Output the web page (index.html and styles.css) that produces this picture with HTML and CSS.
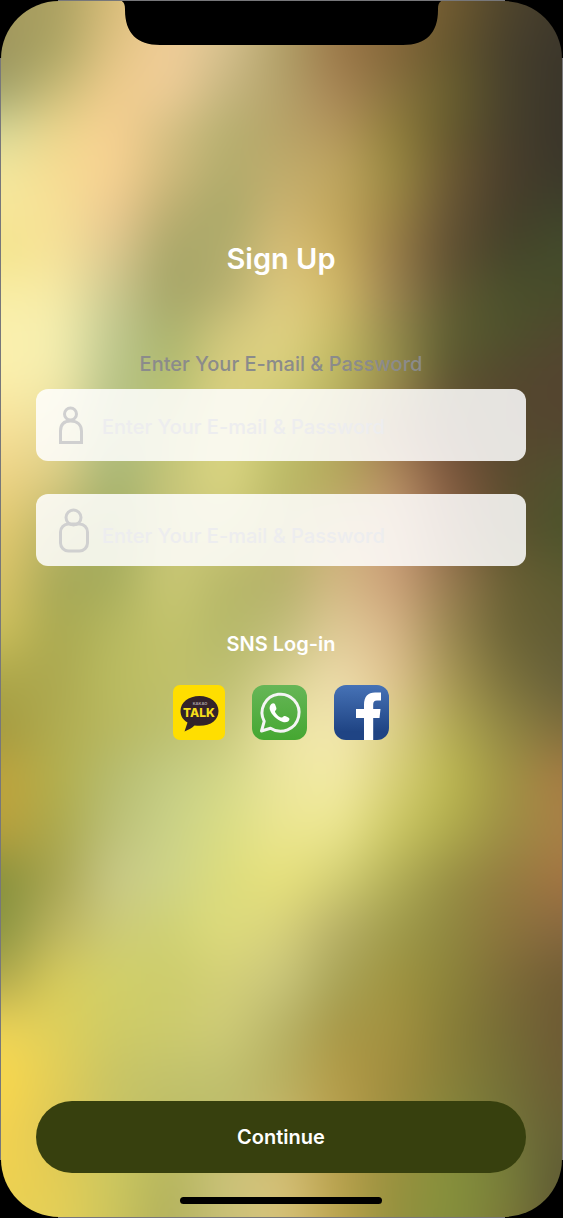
FILE: index.html
```html
<!DOCTYPE html>
<html lang="en">
<head>
<meta charset="utf-8">
<meta name="viewport" content="width=device-width, initial-scale=1">
<title>Sign Up</title>
<link rel="stylesheet" href="styles.css">
</head>
<body>
<div class="device">
  <main class="screen">
    <div class="backdrop" id="backdrop" aria-hidden="true"></div>
    <svg class="notch" viewBox="0 0 328 46" aria-hidden="true">
      <path d="M0 0H328C322 0 320 3 320 9V10C320 33 308 45 285 45H42C19 45 7 33 7 10V9C7 3 5 0 -1 0Z"/>
    </svg>

    <form class="signup">
      <h1 class="title">Sign Up</h1>
      <p class="hint">Enter Your E-mail &amp; Password</p>

      <div class="field">
        <svg class="field-icon" viewBox="0 0 32 46" aria-hidden="true">
          <circle cx="12.500" cy="12" r="6"/>
          <path d="M2.500 40.500V29C2.500 22.500 6 19 12.500 19S23.500 22.500 23.500 29V40.500Z"/>
        </svg>
        <input class="field-input" type="email" aria-label="E-mail" placeholder="Enter Your E-mail &amp; Password">
      </div>

      <div class="field field-password">
        <svg class="field-icon" viewBox="0 0 32 46" aria-hidden="true">
          <circle cx="15.500" cy="10.500" r="7.500"/>
          <rect x="2.500" y="17" width="27" height="27" rx="8"/>
        </svg>
        <input class="field-input" type="password" aria-label="Password" placeholder="Enter Your E-mail &amp; Password">
      </div>

      <h2 class="sns-title">SNS Log-in</h2>
      <div class="sns">
        <button class="sns-button" type="button" aria-label="KakaoTalk">
          <svg width="52" height="55" viewBox="0 0 52 55">
            <rect width="52" height="55" rx="7" fill="#ffde00"/>
            <path d="M26.500 11C15.500 11 7.500 17.500 7.500 26C7.500 31 10 35 14.500 37.500L11.500 46.500C16 44.500 19 43 21.500 40.500C36 42.500 45.500 36 45.500 26C45.500 17.500 37.500 11 26.500 11Z" fill="#33232a"/>
            <text x="27" y="20" class="kakao-small">KAKAO</text>
            <text x="26" y="32" class="kakao-talk">TALK</text>
          </svg>
        </button>
        <button class="sns-button" type="button" aria-label="WhatsApp">
          <svg width="55" height="55" viewBox="0 0 55 55">
            <defs><linearGradient id="wa" x2="0" y2="1"><stop stop-color="#66b657"/><stop offset="1" stop-color="#45a731"/></linearGradient></defs>
            <rect width="55" height="55" rx="12" fill="url(#wa)"/>
            <path d="M9.500 46L12.200 36.300A18.500 18.500 0 1 1 18.500 43.200Z" fill="none" stroke="#f4f4f4" stroke-width="3" stroke-linejoin="round"/>
            <path d="M20.500 18.500C22 18 23 19 23.500 20.500C24.500 23 25 24 23.500 25.500C22.500 26.500 23 27 24 28.500C25.500 31 27.500 32 29 32.500C30.500 33 31.500 30.500 33 31C34.500 31.500 37.500 32.500 37.500 34C37.500 36.500 34 38 31 37C24 34.500 19.500 29.500 18 25C17 22 18.500 19 20.500 18.500Z" fill="#fff"/>
          </svg>
        </button>
        <button class="sns-button" type="button" aria-label="Facebook">
          <svg width="55" height="55" viewBox="0 0 55 55">
            <defs><linearGradient id="fb" x2="0" y2="1"><stop stop-color="#4672b6"/><stop offset=".85" stop-color="#1f4484"/></linearGradient></defs>
            <rect width="55" height="55" rx="12" fill="url(#fb)"/>
            <path d="M30 55V33H22V24H30V20C30 11.500 34 7.500 41 7.500H47V15.500H43C40.300 15.500 39.200 16.800 39.200 19.500V24H46.500L45.500 33H39.200V55Z" fill="#fff"/>
          </svg>
        </button>
      </div>

      <button class="continue" type="submit">Continue</button>
      <div class="home-bar"></div>
    </form>
  </main>
</div>
<script src="backdrop.js"></script>
</body>
</html>
```
FILE: styles.css
```css
* { box-sizing: border-box; }

body {
  margin: 0;
  background: #000;
  font-family: Inter, "Liberation Sans", sans-serif;
}

.device {
  display: flex;
  min-height: 100vh;
  padding: 1px;
  background:
    linear-gradient(#77777a, #77777a) center / 100% calc(100% - 116px) no-repeat,
    linear-gradient(#77777a, #77777a) center / calc(100% - 116px) 100% no-repeat,
    #000;
}

.screen {
  position: relative;
  display: flex;
  flex: 1;
  overflow: hidden;
  border-radius: 58px;
}

.backdrop {
  position: absolute;
  inset: -60px;
  filter: blur(18px);
}

.band { position: absolute; inset: 0; }

.notch {
  position: absolute;
  top: -1px;
  left: calc(50% - 164px);
  width: 328px;
  height: 46px;
}

.signup {
  position: relative;
  display: flex;
  flex: 1;
  flex-direction: column;
  padding: 238px 36px 13px 35px;
}

.title, .hint, .sns-title {
  margin: 0;
  text-align: center;
  font-weight: 600;
  color: #fff;
}

.title { font-size: 29px; line-height: 40px; }

.hint {
  margin-top: 71px;
  font-size: 20px;
  font-weight: 500;
  line-height: 28px;
  color: #8b8b8b;
}

.field {
  display: flex;
  align-items: center;
  height: 72px;
  margin-top: 11px;
  padding: 0 20px 0 22px;
  border-radius: 12px;
  background: rgba(255, 255, 255, .85);
}

.field-password { margin-top: 33px; }

.field-icon {
  width: 32px;
  height: 46px;
  flex: none;
  fill: none;
  stroke: #d0d0d0;
  stroke-width: 3;
}

.field-input {
  flex: 1;
  min-width: 0;
  height: 100%;
  margin-left: 12px;
  padding: 4px 0 0;
  border: 0;
  outline: 0;
  background: none;
  font: 500 20px/28px Inter, "Liberation Sans", sans-serif;
  color: #555;
}

.field-password .field-input { padding-top: 12px; }
.field-input::placeholder { color: #ededef; opacity: 1; }

.sns-title { margin-top: 64px; font-size: 20px; line-height: 28px; }

.sns {
  display: flex;
  justify-content: center;
  gap: 27px;
  margin: 27px 0 40px;
}

.sns-button { padding: 0; border: 0; background: none; cursor: pointer; }
.sns-button svg { display: block; }

.kakao-talk {
  font: 800 12px Inter, sans-serif;
  text-anchor: middle;
  fill: #f5de1a;
}

.kakao-small {
  font: 700 4px Inter, sans-serif;
  text-anchor: middle;
  fill: #a8a0a4;
}

.continue {
  height: 72px;
  margin-top: auto;
  border: 0;
  border-radius: 36px;
  background: #37400e;
  font: 600 20px/28px Inter, "Liberation Sans", sans-serif;
  color: #fff;
  cursor: pointer;
}

.home-bar {
  width: 202px;
  height: 7px;
  margin: 24px auto 0;
  border-radius: 4px;
  background: #000;
}
```
FILE: backdrop.js
```js
// Colour mesh: each row is [height on a 1218-unit scale, eleven colours left to right].
const mesh = [
  [0, "a89c60 a99f60 d8bd78 f0cc94 dfc796 b8a66c 9c7a4c 8a6c3c 705a30 4f452c 40392c"],
  [50, "9c945c aca663 e3c484 f2ce9a d4c08e b0a068 9c7848 84663a 66582e 48402c 3b362b"],
  [90, "a2a46c cbbd78 f0cc8c efcd98 c6b680 b4a26a a88455 8a7440 6a602e 48412c 3a352a"],
  [130, "d6d898 ecd68c f8d092 d6c084 b6b070 b8a468 b4965c 92803c 665a2e 48402c 3a352a"],
  [170, "f2e79c f6dc92 f8d292 d0ba7c b2ac6c c0ac6c c0a660 9a8a42 6c5832 4a3e2c 3b382a"],
  [210, "f7e79a f7e096 eeca92 bcae70 a8a868 ccb472 c2a75c 9c8444 665434 463e2a 3e422a"],
  [250, "f3e48c f7e29a dec890 a8a668 b0ac6c d8bf78 cbb060 987c48 604f32 45442a 444c2c"],
  [290, "f8eda2 f7eaa6 ccc890 a4a466 b4ae6e deca80 d2b968 9c8250 605732 4b502c 474c2a"],
  [330, "fbf0ae f5efb0 c0c890 a8b06c d0c67c e2d284 cabc68 948a4c 5e5e32 4e522c 50482e"],
  [375, "fcf0ac f4ecae b8c48a b0bc6e dcd080 d8d07c bcb860 98904c 5c5630 54482e 544430"],
  [430, "f8e098 e8dc98 aebc80 c0c474 dcd484 c4c270 b4a860 98704c 6a4e38 56482e 544630"],
  [475, "eed486 dccc84 a4b474 c4c478 ded884 babb66 b4a85a b48c60 80583e 5a4a2e 50522e"],
  [530, "e4ca70 b8b468 a0ac60 c8c478 ccc878 bcb668 cab078 c89c78 8c6448 5c502e 4c542c"],
  [580, "dac468 a6a858 a6ac5c ccca76 b8b868 b4b06a d4b884 cca078 987a50 6a6034 5c5a30"],
  [630, "cec05c a8a850 b6b860 c4c46c b4b868 c0bc78 e0cb98 d8b688 9a8850 6c6436 625c34"],
  [680, "aca648 aca850 babc60 c0c068 bcbe70 d8d090 eedcac e0c490 a89854 7c723c 66603a"],
  [730, "a49a40 b0ac50 b8b860 bcc070 c8c87c ece4a4 f3e8b0 dcd088 b4ac54 928844 806e3c"],
  [780, "c0a43c b2ae4c b6bc70 c4cc84 d4d888 ece69c f3eba6 d8d078 bcb850 a09444 a87c44"],
  [830, "b8a03c aaa84c bcc078 cad288 dadd84 ece690 ece690 ccc864 b0ac4c 9c8e44 a88046"],
  [880, "86903c a8a450 c8c888 ced488 dcdc7c e8e27c d4d074 b4b058 989044 947c40 a47442"],
  [930, "8a9440 bcb460 cccb78 cfd174 dedc7c d8d27c b8b068 a09c4c 908840 8c743c 886840"],
  [980, "b0a84c d8cc5c d2d068 cccc6c d4d078 cac67c a8a458 a09440 8c843a 7e6c38 705c34"],
  [1030, "eed458 dfd05a cecb66 cccb6c cecb78 b8b468 a89848 a39240 887e38 766c36 6e5a34"],
  [1080, "fad84c e2cd58 c8c464 c2c26c c0c06e b8b060 b49c48 a08c3e 888039 747036 6c5c34"],
  [1130, "f4d250 dcc858 c8c464 bcbc64 bcbc6c c8b86c b8a050 9c9040 84883c 74743a 666034"],
  [1180, "f0d250 e4cc54 ccc860 b4b45c ccc47c d6c078 b8a04c 98903e 86923c 78803a 5e5a34"],
  [1218, "e8d054 e4d058 ccc45c b0b05c c8c078 d8c47c bca44c 94903e 84903c 7c7a38 605834"]
];

// The backdrop overhangs the screen by 60px on every side.
const at = (part) => `calc(60px + (100% - 120px) * ${part})`;
const backdrop = document.getElementById("backdrop");

mesh.forEach(([y, row], i) => {
  const band = document.createElement("div");
  band.className = "band";
  const stops = row.split(" ").map((c, n) => `#${c} ${at(n / 10)}`);
  band.style.backgroundImage = `linear-gradient(90deg, ${stops.join(", ")})`;
  if (i > 0) {
    const from = at(mesh[i - 1][0] / 1218);
    band.style.maskImage = `linear-gradient(transparent ${from}, #000 ${at(y / 1218)})`;
  }
  backdrop.append(band);
});
```
